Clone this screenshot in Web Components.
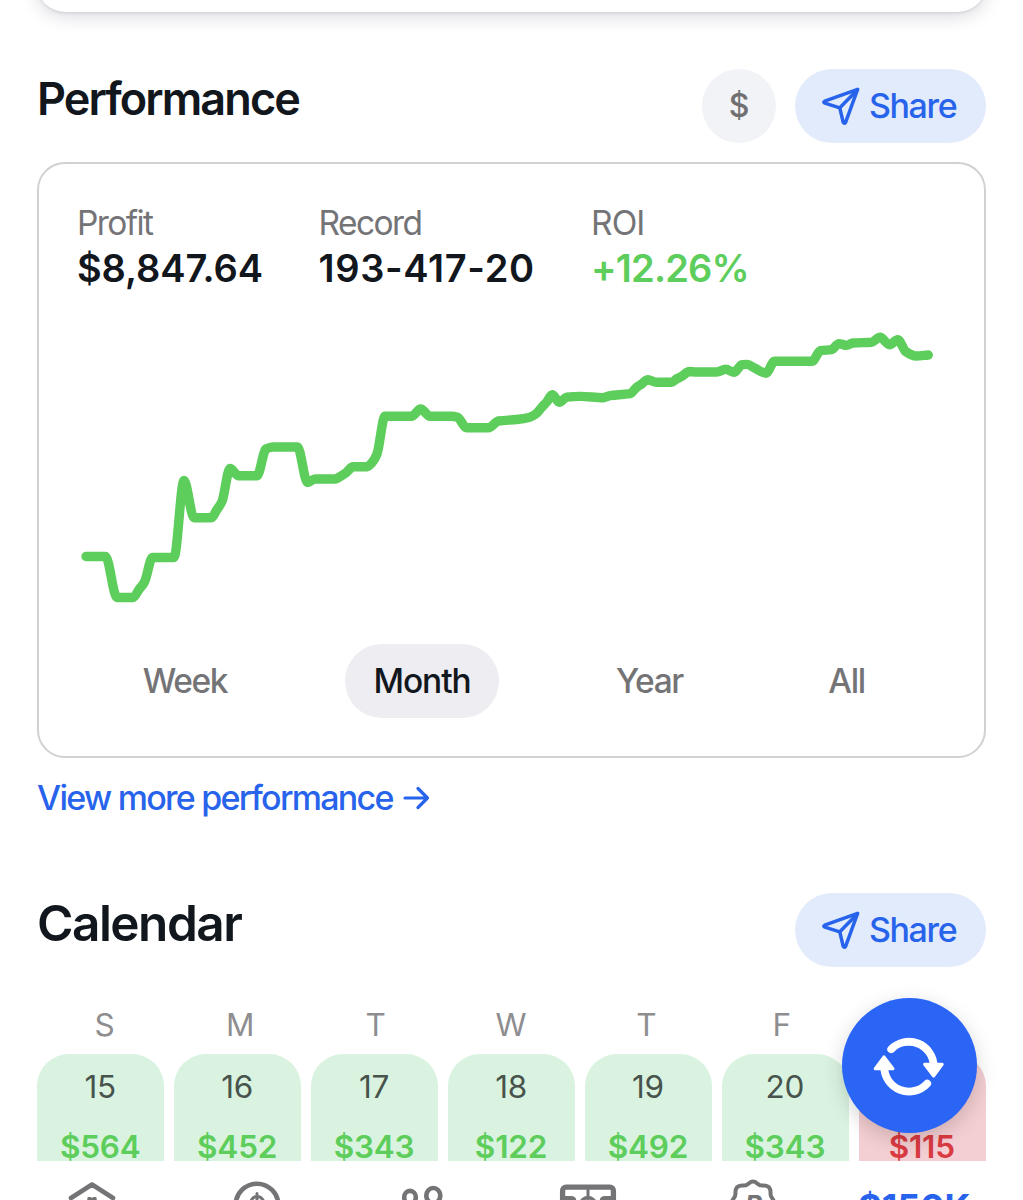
<!DOCTYPE html>
<html lang="en">
<head>
<meta charset="utf-8">
<title>Performance</title>
<style>
  :root {
    --ink: #12161d;
    --muted: #747477;
    --blue: #2763eb;
    --green: #5dcd5b;
  }

  body {
    margin: 0;
    width: 1023px;
    height: 1200px;
    overflow: hidden;
    background: #fff;
    color: var(--ink);
    font-family: Inter, "Liberation Sans", sans-serif;
  }
</style>
</head>
<body>
<app-screen></app-screen>

<script>
class AppScreen extends HTMLElement {
  constructor() {
    super();
    this.attachShadow({ mode: "open" });
  }

  static get styles() {
    return /* css */`
      :host {
        display: grid;
        grid-template-rows: 1161px 39px;
        height: 1200px;
        position: relative;
        overflow: hidden;
      }

      main {
        display: flow-root;
        overflow: hidden;
        padding: 0 37px;
      }

      .previous {
        height: 60px;
        margin: -48px 0 57px;
        border-radius: 28px;
        box-shadow: 0 4px 18px #2020402b, 0 1px 3px #20204020;
      }

      performance-card {
        margin-top: 19px;
      }

      more-link {
        margin-top: 20px;
      }

      .calendar {
        margin-top: 75px;
      }

      month-calendar {
        margin-top: 37px;
      }

      refresh-button {
        position: absolute;
        left: 842px;
        top: 998px;
      }
    `;
  }

  connectedCallback() {
    this.shadowRoot.innerHTML = /* html */`
    <style>${AppScreen.styles}</style>
    <main>
      <div class="previous"></div>
      <section-header style="--size: 45px; --spacing: -1.9px; --lift: -8px">
        Performance
        <currency-button slot="actions">$</currency-button>
        <share-button slot="actions"></share-button>
      </section-header>
      <performance-card></performance-card>
      <more-link>View more performance</more-link>
      <section-header class="calendar" style="--size: 49.5px; --spacing: -1.5px; --lift: -6px">
        Calendar
        <share-button slot="actions"></share-button>
      </section-header>
      <month-calendar></month-calendar>
    </main>
    <tab-bar></tab-bar>
    <refresh-button></refresh-button>`;
  }
}

class SectionHeader extends HTMLElement {
  constructor() {
    super();
    this.attachShadow({ mode: "open" });
  }

  connectedCallback() {
    this.shadowRoot.innerHTML = /* html */`
    <style>
      :host {
        display: flex;
        justify-content: space-between;
        align-items: center;
        height: 74px;
      }

      h2 {
        margin: 0;
        font-size: var(--size);
        font-weight: 600;
        line-height: 1;
        letter-spacing: var(--spacing);
        padding-bottom: calc(var(--lift) * -2);
      }

      .actions {
        display: flex;
        gap: 19px;
      }
    </style>
    <h2><slot></slot></h2>
    <div class="actions"><slot name="actions"></slot></div>`;
  }
}

class CurrencyButton extends HTMLElement {
  constructor() {
    super();
    this.attachShadow({ mode: "open" });
  }

  connectedCallback() {
    this.shadowRoot.innerHTML = /* html */`
    <style>
      :host {
        display: grid;
        place-items: center;
        width: 74px;
        height: 74px;
        border-radius: 50%;
        background: #f2f3f7;
        color: #707073;
        font-size: 32px;
        font-weight: 500;
        line-height: 34px;
      }
    </style>
    <slot></slot>`;
  }
}

class ShareButton extends HTMLElement {
  constructor() {
    super();
    this.attachShadow({ mode: "open" });
  }

  connectedCallback() {
    this.shadowRoot.innerHTML = /* html */`
    <style>
      :host {
        display: flex;
        align-items: center;
        gap: 9px;
        box-sizing: border-box;
        width: 191px;
        height: 74px;
        padding-left: 27px;
        border-radius: 37px;
        background: #e2ebfc;
        color: var(--blue);
        font-size: 34px;
        font-weight: 500;
        line-height: 1;
        letter-spacing: -1.4px;
      }

      svg {
        flex: none;
      }
    </style>
    <svg width="38" height="40" viewBox="0 0 38 40" fill="none" stroke="currentColor" stroke-width="3.5" stroke-linejoin="round" stroke-linecap="round">
      <path d="M35.6 3.3 2.7 15.2Q.8 16.3 2.9 17.2L17.8 21.8 21.2 36.3Q22.5 38.3 23.6 36.3L35.6 3.3Z"/>
      <path d="M17.8 21.8 35.3 4"/>
    </svg>
    <span>Share</span>`;
  }
}

class PerformanceCard extends HTMLElement {
  constructor() {
    super();
    this.attachShadow({ mode: "open" });
  }

  static get styles() {
    return /* css */`
      :host {
        display: block;
        box-sizing: border-box;
        height: 596px;
        border: 2px solid #d1d1d4;
        border-radius: 28px;
        padding: 37px 38px;
      }

      .stats {
        display: grid;
        grid-template-columns: 241.5px 272.5px auto;
        height: 119px;
      }

      .label {
        color: var(--muted);
        font-size: 33.5px;
        line-height: 44px;
        letter-spacing: -1.6px;
      }

      .value {
        font-size: 38px;
        font-weight: 600;
        line-height: 46px;
        letter-spacing: -0.1px;
        white-space: nowrap;
      }

      .record .value {
        letter-spacing: 0.65px;
      }

      .roi .label {
        letter-spacing: -0.9px;
      }

      .roi .value {
        color: var(--green);
        letter-spacing: -0.8px;
      }

      .ranges {
        display: grid;
        grid-template-columns: 140px 154px 121px 93px;
        gap: 90px;
        margin: 24px 0 0 38px;
      }

      .range {
        height: 74px;
        border-radius: 37px;
        color: var(--muted);
        font-size: 33.5px;
        font-weight: 500;
        line-height: 74px;
        letter-spacing: -1.4px;
        text-align: center;

        &.selected {
          background: #ededf2;
          color: var(--ink);
          letter-spacing: -1.1px;
        }
      }
    `;
  }

  connectedCallback() {
    this.shadowRoot.innerHTML = /* html */`
    <style>${PerformanceCard.styles}</style>
    <div class="stats">
      <div>
        <div class="label">Profit</div>
        <div class="value">$8,847.64</div>
      </div>
      <div class="record">
        <div class="label">Record</div>
        <div class="value">193-417-20</div>
      </div>
      <div class="roi">
        <div class="label">ROI</div>
        <div class="value">+12.26%</div>
      </div>
    </div>
    <profit-chart></profit-chart>
    <div class="ranges">
      <div class="range">Week</div>
      <div class="range selected">Month</div>
      <div class="range">Year</div>
      <div class="range">All</div>
    </div>`;
  }
}

const PROFIT = [
  [86, 556.5], [105.5, 556.5], [117, 597.5], [133, 597.5], [139, 589.5],
  [144.5, 582], [152.5, 557.5], [174, 557.5], [184, 480.5], [194, 517.8],
  [211, 517.8], [217, 509.5], [222, 501.5], [230, 468.5], [238.5, 475.8],
  [257, 475.8], [266, 449], [273, 447], [297.5, 447], [307.5, 482.5],
  [315, 479], [335, 479], [340.5, 476.3], [346, 472.7], [353, 466.8],
  [367, 466.8], [372.5, 462], [377, 454], [385, 416.3], [411.5, 416.3],
  [420.7, 409], [430, 416.3], [451.5, 416.3], [457.5, 417.3], [466.5, 427.7],
  [488.5, 427.7], [498.5, 421], [516.5, 419.5], [529, 417.5], [536.5, 413.5],
  [541.7, 407.3], [546.7, 402], [552.3, 394.8], [559.3, 402.3], [566.7, 397.2],
  [580, 396.4], [603, 397.7], [610, 395.6], [630, 393.7], [636.7, 387.2],
  [641.7, 384], [647.8, 379.7], [656.5, 382.3], [671.5, 382.3], [677, 378.7],
  [682, 376.2], [689.3, 371.5], [696, 372], [716.7, 372], [725.7, 369.3],
  [734.3, 372.3], [742, 364.6], [747, 364.4], [755, 368.3], [766, 373.2],
  [774.5, 361.3], [812, 361.3], [820.5, 350.7], [831.5, 349.6], [839, 343.6],
  [846.5, 345.4], [853, 343], [871.5, 342.3], [880, 337.3], [889.5, 344.7],
  [897.7, 339.7], [906, 351.8], [916, 356], [928.3, 355],
];

// monotone cubic, so the flat stretches stay flat
const smoothPath = (points) => {
  const n = points.length;
  const slope = points.slice(1).map(([x, y], i) => (y - points[i][1]) / (x - points[i][0]));
  const tangent = points.map((_, i) => {
    if (i === 0) return slope[0];
    if (i === n - 1) return slope[n - 2];
    const [a, b] = [slope[i - 1], slope[i]];
    return a * b <= 0 ? 0 : (2 * a * b) / (a + b);
  });

  let d = `M${points[0]}`;
  for (let i = 1; i < n; i++) {
    const [x0, y0] = points[i - 1];
    const [x1, y1] = points[i];
    const h = (x1 - x0) / 3;
    d += `C${x0 + h},${y0 + h * tangent[i - 1]} ${x1 - h},${y1 - h * tangent[i]} ${x1},${y1}`;
  }
  return d;
};

class ProfitChart extends HTMLElement {
  constructor() {
    super();
    this.attachShadow({ mode: "open" });
  }

  connectedCallback() {
    this.shadowRoot.innerHTML = /* html */`
    <style>
      :host {
        display: block;
        height: 300px;
      }

      svg {
        display: block;
      }

      path {
        fill: none;
        stroke: var(--green);
        stroke-width: 9.4;
        stroke-linecap: round;
        stroke-linejoin: round;
      }
    </style>
    <svg width="869" height="300" viewBox="77 320 869 300">
      <path d="${smoothPath(PROFIT)}"/>
    </svg>`;
  }
}

class MoreLink extends HTMLElement {
  constructor() {
    super();
    this.attachShadow({ mode: "open" });
  }

  connectedCallback() {
    this.shadowRoot.innerHTML = /* html */`
    <style>
      :host {
        display: flex;
        align-items: center;
        gap: 10.5px;
        height: 40px;
        color: var(--blue);
        font-size: 34px;
        font-weight: 500;
        line-height: 40px;
        letter-spacing: -1.73px;
      }
    </style>
    <span><slot></slot></span>
    <svg width="27" height="24" viewBox="0 0 27 24" fill="none" stroke="currentColor" stroke-width="3.2" stroke-linecap="round" stroke-linejoin="round">
      <path d="M2 12H24.5M15 2.5 24.5 12 15 21.5"/>
    </svg>`;
  }
}

class MonthCalendar extends HTMLElement {
  constructor() {
    super();
    this.attachShadow({ mode: "open" });
  }

  static get styles() {
    return /* css */`
      :host {
        display: block;
      }

      .weekdays {
        display: grid;
        grid-template-columns: repeat(7, 1fr);
        height: 49.5px;
        color: #8e8e91;
        font-size: 31.5px;
        line-height: 41px;
        text-align: center;
        margin-right: 1px;
      }

      .days {
        display: grid;
        grid-template-columns: repeat(7, 1fr);
        gap: 9.5px;
      }
    `;
  }

  connectedCallback() {
    this.shadowRoot.innerHTML = /* html */`
    <style>${MonthCalendar.styles}</style>
    <div class="weekdays">
      ${["S", "M", "T", "W", "T", "F", "S"].map((d) => `<span>${d}</span>`).join("")}
    </div>
    <div class="days">
      <day-cell day="15">$564</day-cell>
      <day-cell day="16">$452</day-cell>
      <day-cell day="17">$343</day-cell>
      <day-cell day="18">$122</day-cell>
      <day-cell day="19">$492</day-cell>
      <day-cell day="20">$343</day-cell>
      <day-cell day="21" loss>$115</day-cell>
    </div>`;
  }
}

class DayCell extends HTMLElement {
  constructor() {
    super();
    this.attachShadow({ mode: "open" });
  }

  connectedCallback() {
    this.day = this.getAttribute("day") ?? "";
    this.shadowRoot.innerHTML = /* html */`
    <style>
      :host {
        display: block;
        box-sizing: border-box;
        height: 150px;
        padding-top: 13.5px;
        border-radius: 32px;
        background: #daf3e0;
        color: var(--green);
        font-size: 31.5px;
        line-height: 40px;
        text-align: center;
      }

      :host([loss]) {
        background: #f3ced2;
        color: #da3a41;
      }

      .day {
        color: #47534c;
        letter-spacing: -0.3px;
        padding-right: 1px;
      }

      .amount {
        margin-top: 20px;
        padding-right: 1px;
        font-weight: 600;
        letter-spacing: -0.2px;
      }
    </style>
    <div class="day">${this.day}</div>
    <div class="amount"><slot></slot></div>`;
  }
}

class RefreshButton extends HTMLElement {
  constructor() {
    super();
    this.attachShadow({ mode: "open" });
  }

  connectedCallback() {
    this.shadowRoot.innerHTML = /* html */`
    <style>
      :host {
        display: grid;
        place-items: center;
        width: 135px;
        height: 135px;
        border-radius: 50%;
        background: #2a65f6;
        box-shadow: 0 6px 20px #0000002b;
      }
    </style>
    <svg width="135" height="135" viewBox="842 998 135 135" fill="none" stroke="#fff" stroke-linecap="round" stroke-linejoin="round">
      <g stroke-width="7.8">
        <path d="M891.2 1049.2A24.8 24.8 0 0 1 933.7 1066"/>
        <path d="M927.2 1083.6A24.8 24.8 0 0 1 884.2 1067"/>
      </g>
      <g fill="#fff" stroke-width="3">
        <path d="M924.6 1064.3H942.2L933.6 1076Z"/>
        <path d="M875.2 1068.7H893L884 1056.8Z"/>
      </g>
    </svg>`;
  }
}

class TabBar extends HTMLElement {
  constructor() {
    super();
    this.attachShadow({ mode: "open" });
  }

  static get styles() {
    return /* css */`
      :host {
        display: grid;
        grid-template-columns: repeat(6, 165.1px);
        justify-items: center;
        box-sizing: border-box;
        height: 39px;
        padding-left: 9.7px;
        background: #fff;
        color: #747477;
        overflow: hidden;
      }

      svg {
        display: block;
        margin-top: 15px;
        fill: none;
        stroke: currentColor;
        stroke-width: 4.6;
        stroke-linecap: round;
        stroke-linejoin: round;
      }

      text {
        fill: currentColor;
        stroke: none;
        font-weight: 700;
      }

      .balance {
        color: var(--blue);
        font-size: 36px;
        font-weight: 700;
        line-height: 40px;
        padding: 25.5px 7px 0 0;
      }
    `;
  }

  connectedCallback() {
    this.shadowRoot.innerHTML = /* html */`
    <style>${TabBar.styles}</style>
    <svg width="60" height="60" viewBox="0 0 60 60">
      <path d="M9 22 30 8.5 51 22M14 31V52H46V31"/>
      <path d="M26.5 22H28.5L30 23 31.5 22H33.5L34 25 30 30 26 25Z" fill="currentColor" stroke-width="2"/>
    </svg>
    <svg width="60" height="60" viewBox="0 0 60 60">
      <circle cx="30" cy="29" r="21.3"/>
      <path d="M36 24Q34 20.5 30 20.5T24 25Q24 29 30 29.5T36 34Q36 38 30 38 25.5 38 24 34.5M30 17.5V41" stroke-width="3"/>
    </svg>
    <svg width="60" height="60" viewBox="0 0 60 60">
      <ellipse cx="18" cy="21.3" rx="5.8" ry="6.4"/>
      <ellipse cx="41.3" cy="19.6" rx="7" ry="7.6"/>
      <path d="M7 46Q9 34 18 34M30 50Q31 34 42 34T54 50Z"/>
    </svg>
    <svg width="60" height="60" viewBox="0 0 60 60">
      <rect x="4.6" y="11.2" width="50.8" height="38" rx="3.5" stroke-width="5.3"/>
      <path d="M30 11V49" stroke-width="3"/>
      <circle cx="30" cy="29" r="7.5" stroke-width="3.5"/>
      <path d="M5 22H13Q16.5 22 16.5 26V35H5M55 22H47Q43.5 22 43.5 26V35H55" stroke-width="4"/>
    </svg>
    <svg width="60" height="60" viewBox="0 0 60 60">
      <path stroke-width="4" d="M30 5.5C34 5.5 34.5 9.5 39 9.5 46 9 48 12 47.5 18 47.5 22 51.5 23 51.5 28 51.5 33 47.5 34 47.5 38 48 45 45 47 39 47 34.5 47 34 50.5 30 50.5S25.5 47 21 47C15 47 12 45 12.5 38 12.5 34 8.5 33 8.5 28S12.5 22 12.5 18C12 12 14 9 21 9.5 25.5 9.5 26 5.5 30 5.5Z"/>
      <text x="22" y="38" font-size="26" font-style="italic">P</text>
    </svg>
    <div class="balance">$150K</div>`;
  }
}

customElements.define("section-header", SectionHeader);
customElements.define("currency-button", CurrencyButton);
customElements.define("share-button", ShareButton);
customElements.define("profit-chart", ProfitChart);
customElements.define("performance-card", PerformanceCard);
customElements.define("more-link", MoreLink);
customElements.define("day-cell", DayCell);
customElements.define("month-calendar", MonthCalendar);
customElements.define("refresh-button", RefreshButton);
customElements.define("tab-bar", TabBar);
customElements.define("app-screen", AppScreen);
</script>
</body>
</html>
